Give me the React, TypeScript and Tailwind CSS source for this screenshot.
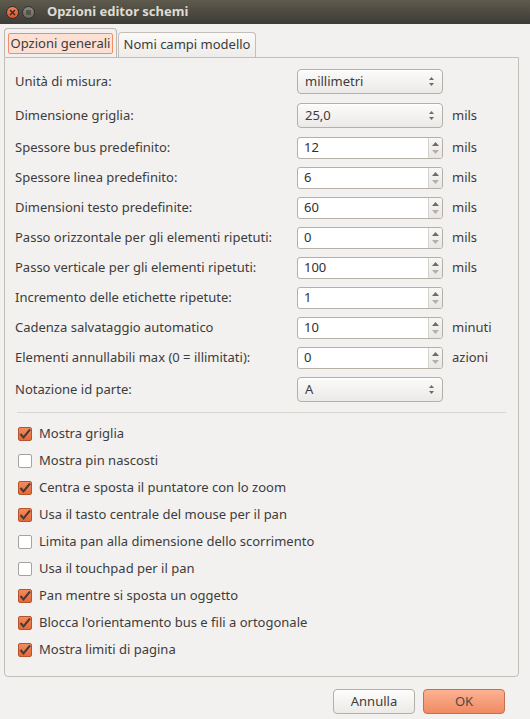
import React from "react";

type Row = {
  label: string;
  value: string;
  kind: "combo" | "spin";
  unit?: string;
};

const rows: Row[] = [
  { label: "Unità di misura:", value: "millimetri", kind: "combo" },
  { label: "Dimensione griglia:", value: "25,0", kind: "combo", unit: "mils" },
  { label: "Spessore bus predefinito:", value: "12", kind: "spin", unit: "mils" },
  { label: "Spessore linea predefinito:", value: "6", kind: "spin", unit: "mils" },
  { label: "Dimensioni testo predefinite:", value: "60", kind: "spin", unit: "mils" },
  { label: "Passo orizzontale per gli elementi ripetuti:", value: "0", kind: "spin", unit: "mils" },
  { label: "Passo verticale per gli elementi ripetuti:", value: "100", kind: "spin", unit: "mils" },
  { label: "Incremento delle etichette ripetute:", value: "1", kind: "spin" },
  { label: "Cadenza salvataggio automatico", value: "10", kind: "spin", unit: "minuti" },
  { label: "Elementi annullabili max (0 = illimitati):", value: "0", kind: "spin", unit: "azioni" },
  { label: "Notazione id parte:", value: "A", kind: "combo" },
];

const checks: { label: string; on: boolean }[] = [
  { label: "Mostra griglia", on: true },
  { label: "Mostra pin nascosti", on: false },
  { label: "Centra e sposta il puntatore con lo zoom", on: true },
  { label: "Usa il tasto centrale del mouse per il pan", on: true },
  { label: "Limita pan alla dimensione dello scorrimento", on: false },
  { label: "Usa il touchpad per il pan", on: false },
  { label: "Pan mentre si sposta un oggetto", on: true },
  { label: "Blocca l'orientamento bus e fili a ortogonale", on: true },
  { label: "Mostra limiti di pagina", on: true },
];

function UpDown() {
  return (
    <svg width="7" height="11" viewBox="0 0 7 11">
      <path d="M3.5 1 L6 4 L1 4 Z" fill="#6f6c66" />
      <path d="M3.5 10 L6 7 L1 7 Z" fill="#6f6c66" />
    </svg>
  );
}

function Combo({ value }: { value: string }) {
  return (
    <div className="flex h-[25px] w-[146px] items-center justify-between rounded-[4px] border border-[#b4b0a8] bg-gradient-to-b from-[#fbfbfa] to-[#ebeae8] pl-[7px] pr-[7px] text-[#3c3c3c] shadow-[inset_0_1px_0_#ffffff]">
      <span>{value}</span>
      <UpDown />
    </div>
  );
}

function Spin({ value }: { value: string }) {
  return (
    <div className="flex h-[22px] w-[146px] overflow-hidden rounded-[3px] border border-[#b4b0a8] bg-white">
      <div className="flex flex-1 items-center pl-[6px] text-[#2f2f35]">{value}</div>
      <div className="flex w-[14px] flex-col items-center justify-center gap-[4px] border-l border-[#d6d3ce] bg-gradient-to-b from-[#f7f7f6] to-[#e8e7e5]">
        <svg width="7" height="4" viewBox="0 0 7 4">
          <path d="M3.5 0 L7 4 L0 4 Z" fill="#6f6c66" />
        </svg>
        <svg width="7" height="4" viewBox="0 0 7 4">
          <path d="M0 0 L7 0 L3.5 4 Z" fill="#b3b0aa" />
        </svg>
      </div>
    </div>
  );
}

function Check({ on }: { on: boolean }) {
  if (on) {
    return (
      <div className="flex h-[14px] w-[14px] items-center justify-center rounded-[2px] border border-[#b5532b] bg-gradient-to-b from-[#f48a5c] to-[#e4683a]">
        <svg width="12" height="12" viewBox="0 0 12 12">
          <path d="M1.5 6 L4.5 9.5 L11 1.5" fill="none" stroke="#4a3a33" strokeWidth="2" />
        </svg>
      </div>
    );
  }
  return <div className="h-[14px] w-[14px] rounded-[2px] border border-[#a7a39c] bg-white" />;
}

export default function App() {
  return (
    <div
      className="flex h-[719px] w-[530px] flex-col bg-[#f2f1f0] text-[13px] text-[#3c3c3c]"
      style={{ fontFamily: '"Noto Sans", "Open Sans", sans-serif' }}
    >
      {/* title bar */}
      <div className="flex h-[24px] items-center bg-gradient-to-b from-[#5e5a4d] to-[#3c3b36] pl-[6px]">
        <div className="flex h-[13px] w-[13px] items-center justify-center rounded-full border border-[#3a2a22] bg-gradient-to-b from-[#f0805a] to-[#d9532b]">
          <svg width="7" height="7" viewBox="0 0 7 7">
            <path d="M1 1 L6 6 M6 1 L1 6" stroke="#40261c" strokeWidth="1.4" />
          </svg>
        </div>
        <div className="ml-[3px] flex h-[13px] w-[13px] items-center justify-center rounded-full border border-[#2f2e2a] bg-gradient-to-b from-[#8a877f] to-[#6a6861]">
          <div className="h-[5px] w-[5px] rounded-[1px] bg-[#555249]" />
        </div>
        <span className="ml-[12px] text-[13px] font-bold text-[#dfdbd2]">Opzioni editor schemi</span>
      </div>

      {/* tabs */}
      <div className="mt-[4px] flex items-end pl-[4px]">
        <div className="flex h-[29px] w-[113px] items-start rounded-t-[4px] border border-b-0 border-[#bdb9b2] bg-[#f2f1f0] px-[3px] pt-[4px]">
          <div className="flex h-[21px] w-full items-center justify-center rounded-[2px] border border-[#f08f66] bg-[#fbe0d3] text-[#3c3c3c]">
            Opzioni generali
          </div>
        </div>
        <div className="ml-[1px] flex h-[25px] w-[138px] items-center justify-center rounded-t-[4px] border border-b-0 border-[#c3bfb8] bg-gradient-to-b from-[#fafaf9] to-[#edecea] text-[#3c3c3c]">
          Nomi campi modello
        </div>
      </div>

      {/* panel */}
      <div className="ml-[4px] flex h-[620px] w-[515px] flex-col rounded-b-[4px] border border-[#c3bfb8] pt-[11px]">
        <div className="flex flex-col pl-[10px]">
          {rows.map((r, i) => (
            <div
              key={i}
              className={
                r.kind === "combo"
                  ? "mb-[9px] flex h-[25px] items-center"
                  : "mb-[8px] flex h-[22px] items-center"
              }
            >
              <span className="w-[282px]">{r.label}</span>
              {r.kind === "combo" ? <Combo value={r.value} /> : <Spin value={r.value} />}
              {r.unit && <span className="ml-[9px]">{r.unit}</span>}
            </div>
          ))}
        </div>
        <div className="mx-[12px] mt-[1px] h-px bg-[#d9d6d1]" />
        <div className="mt-[14px] flex flex-col gap-[13px] pl-[13px]">
          {checks.map((c, i) => (
            <div key={i} className="flex h-[14px] items-center gap-[7px]">
              <Check on={c.on} />
              <span>{c.label}</span>
            </div>
          ))}
        </div>
      </div>

      {/* buttons */}
      <div className="mt-[12px] flex justify-end gap-[8px] pr-[25px]">
        <div className="flex h-[25px] w-[82px] items-center justify-center rounded-[4px] border border-[#b4b0a8] bg-gradient-to-b from-[#fdfdfc] to-[#eceae7] text-[#3c3c3c]">
          Annulla
        </div>
        <div className="flex h-[25px] w-[82px] items-center justify-center rounded-[4px] border border-[#c0714f] bg-gradient-to-b from-[#fcb293] to-[#f08a62] text-[#4a4a4a]">
          OK
        </div>
      </div>
    </div>
  );
}
